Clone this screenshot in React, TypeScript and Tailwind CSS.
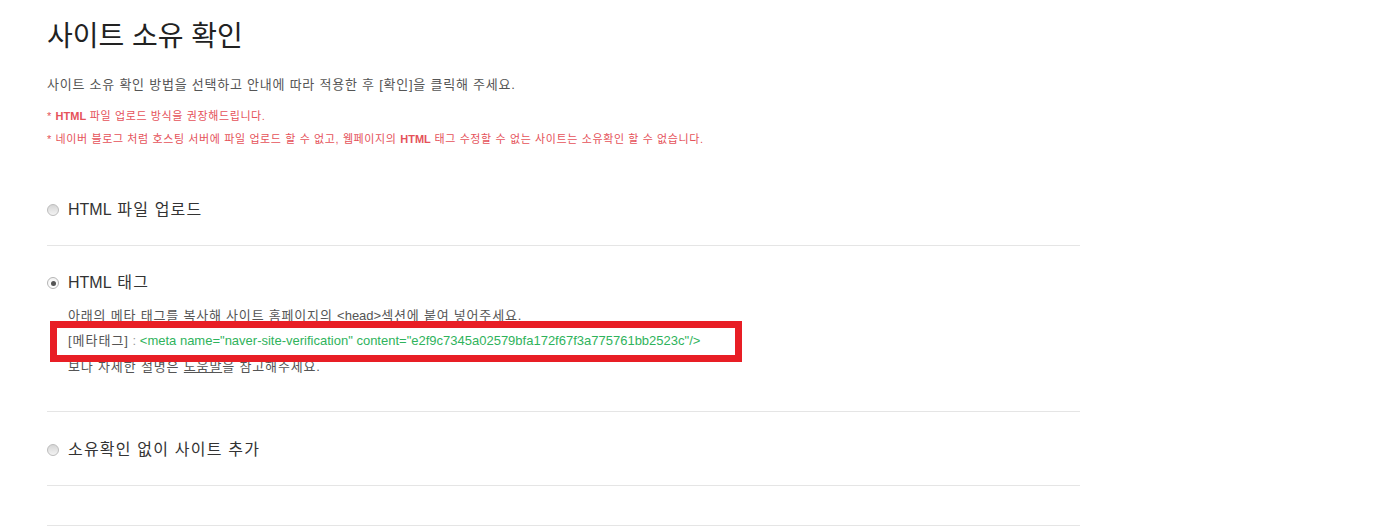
import React from "react";

const font = { fontFamily: '"Liberation Sans", "Noto Sans CJK KR", sans-serif' };

function Radio({ checked }: { checked?: boolean }) {
  return checked ? (
    <span className="flex h-[12px] w-[12px] shrink-0 items-center justify-center rounded-full border border-[#b5b5b5] bg-gradient-to-b from-[#f4f4f4] to-[#ffffff]">
      <span className="h-[5px] w-[5px] rounded-full bg-[#555]" />
    </span>
  ) : (
    <span className="h-[12px] w-[12px] shrink-0 rounded-full border border-[#bdbdbd] bg-gradient-to-b from-[#d6d6d6] to-[#f3f3f3]" />
  );
}

function Option({ children, checked }: { children: React.ReactNode; checked?: boolean }) {
  return (
    <div className="flex h-[20px] items-center gap-[9px]">
      <Radio checked={checked} />
      <span className="text-[16px] leading-[20px] tracking-[0.075em] text-[#333]">{children}</span>
    </div>
  );
}

export default function App() {
  return (
    <div className="min-h-[527px] bg-white pl-[47px] pt-[17px]" style={font}>
      <div className="w-[1033px]">
        <h1 className="text-[28px] leading-[40px] text-[#222]">사이트 소유 확인</h1>
        <p className="mt-[18px] text-[13px] leading-[20px] tracking-[0.059em] text-[#555]">
          사이트 소유 확인 방법을 선택하고 안내에 따라 적용한 후 [확인]을 클릭해 주세요.
        </p>
        <div className="mt-[10px] text-[11px] leading-[23px] tracking-[0.056em] text-[#e5525a]">
          <p>
            * <b className="tracking-normal">HTML</b> 파일 업로드 방식을 권장해드립니다.
          </p>
          <p>
            * 네이버 블로그 처럼 호스팅 서버에 파일 업로드 할 수 없고, 웹페이지의{" "}
            <b className="tracking-normal">HTML</b> 태그 수정할 수 없는 사이트는 소유확인 할 수 없습니다.
          </p>
        </div>

        <div className="border-b border-[#e5e5e5] pb-[25px] pt-[49px]">
          <Option>
            <span className="tracking-normal">HTML</span> 파일 업로드
          </Option>
        </div>

        <div className="border-b border-[#e5e5e5] pb-[34px] pt-[27px]">
          <Option checked>
            <span className="tracking-normal">HTML</span> 태그
          </Option>
          <div className="pl-[21px] text-[13px] leading-[20px] text-[#555]">
            <p className="mt-[13px] tracking-[0.062em]">
              아래의 메타 태그를 복사해 사이트 홈페이지의 <span className="tracking-normal">&lt;head&gt;</span>섹션에 붙여
              넣어주세요.
            </p>
            <div className="relative mt-[5px]">
              <p>
                <span className="tracking-[0.075em]">[메타태그]</span> <span className="text-[#999]">:</span>{" "}
                <span className="text-[#2fb35c]">
                  &lt;meta name="naver-site-verification" content="e2f9c7345a02579bfa172f67f3a775761bb2523c"/&gt;
                </span>
              </p>
              <div className="pointer-events-none absolute left-[-18px] top-[-10px] h-[41px] w-[692px] border-[7px] border-[#e81e25]" />
            </div>
            <p className="mt-[6px] tracking-[0.065em]">
              보다 자세한 설명은 <span className="underline">도움말</span>을 참고해주세요.
            </p>
          </div>
        </div>

        <div className="border-b border-[#e5e5e5] pb-[25px] pt-[28px]">
          <Option>소유확인 없이 사이트 추가</Option>
        </div>

        <div className="h-[40px] border-b border-[#e5e5e5]" />
      </div>
    </div>
  );
}
